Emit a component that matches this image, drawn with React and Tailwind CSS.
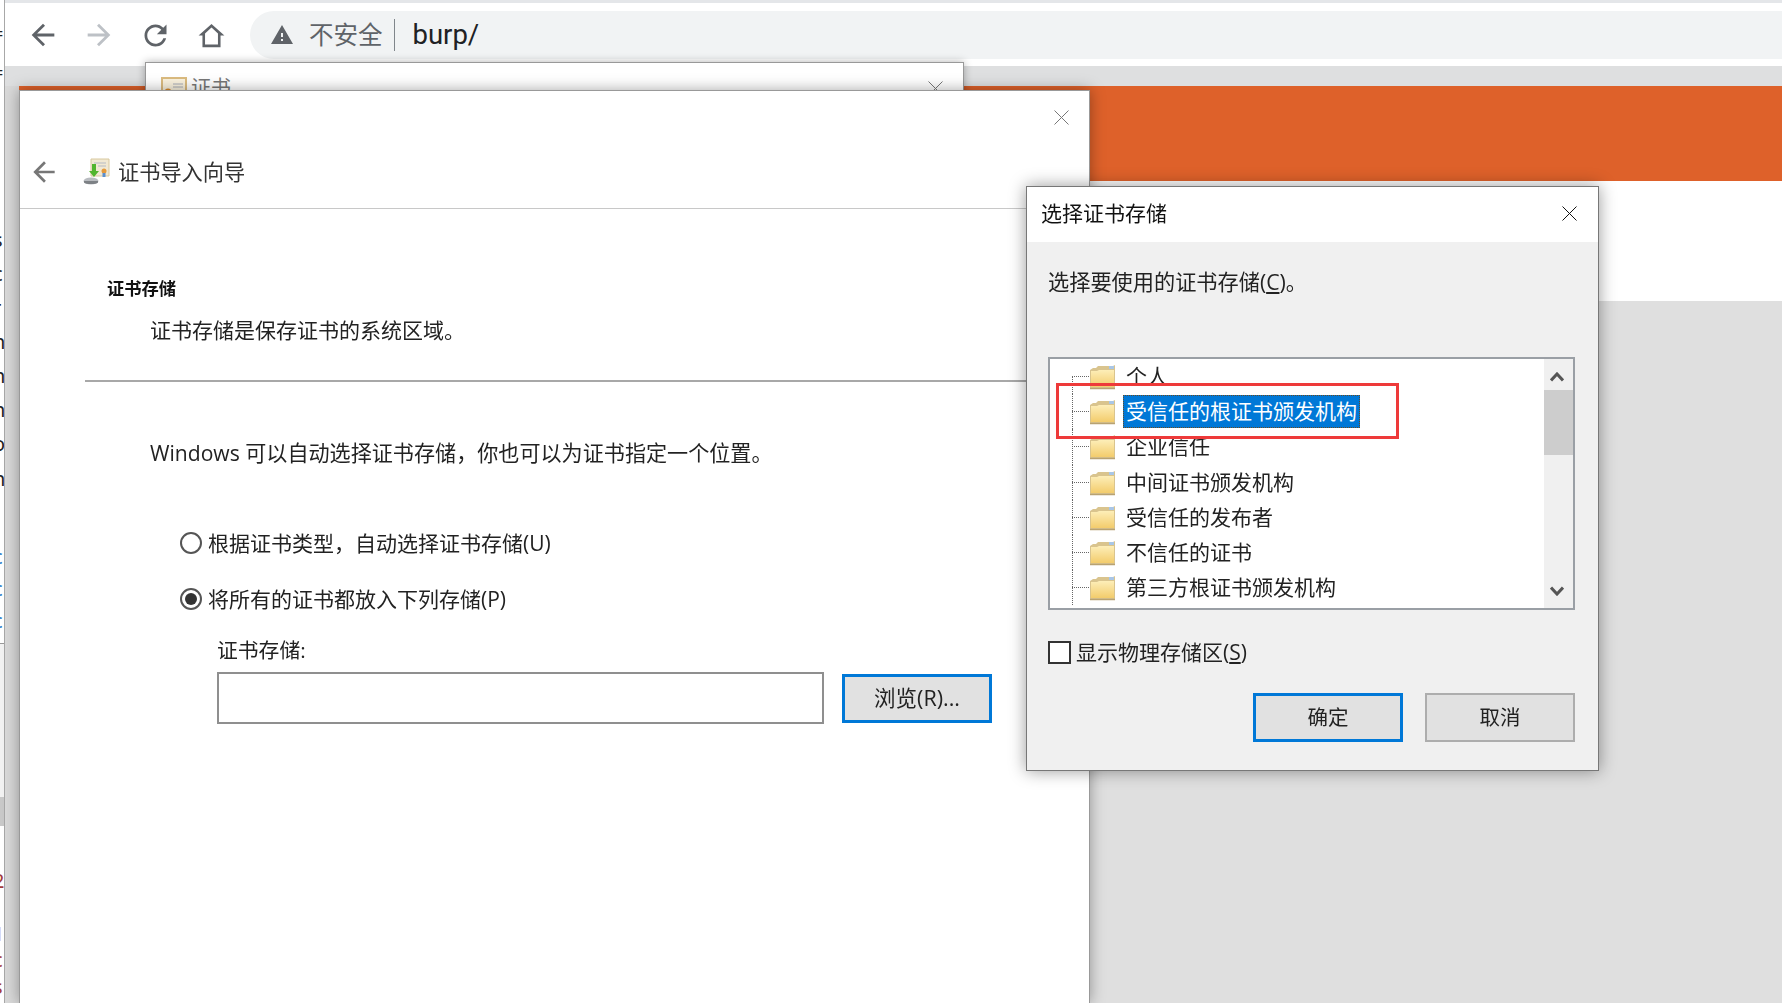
const cjk = "font-['Open_Sans','Noto_Sans_CJK_SC',sans-serif]";

const stores = ['个人', '受信任的根证书颁发机构', '企业信任', '中间证书颁发机构', '受信任的发布者', '不信任的证书', '第三方根证书颁发机构'];
const stripTop = ['s', 'c', 'r', 'n', 'n', 'n', 'o', 'n'];
const stripMid = ['c', 'c', 'c'];
const stripLow = ['2', 'I', '1', 'c', 's'];

function CloseIcon({ className }) {
  return (
    <svg viewBox="0 0 15 15" className={className} fill="none" stroke="currentColor" strokeWidth="1">
      <path d="M0.5 0.5 14.5 14.5M14.5 0.5 0.5 14.5" />
    </svg>
  );
}

function ChromeIcon({ d, className }) {
  return (
    <svg viewBox="0 0 24 24" className={className} fill="currentColor" fillRule="evenodd">
      <path d={d} />
    </svg>
  );
}

function BackArrow({ className }) {
  return <ChromeIcon className={className} d="M20 11H7.83l5.59-5.59L12 4l-8 8 8 8 1.41-1.41L7.83 13H20v-2z" />;
}

function FolderIcon() {
  return (
    <svg viewBox="0 0 27 27" className="h-[27px] w-[27px] shrink-0">
      <defs>
        <linearGradient id="folderFace" x1="0" y1="0" x2="0" y2="1">
          <stop offset="0" stopColor="#fdeeb8" />
          <stop offset="1" stopColor="#f3cc6c" />
        </linearGradient>
      </defs>
      <path d="M1 25.5V7l3-2h3l2-2h15l2-1v23.5z" fill="#d9c48e" />
      <path d="M20 3h5v3h-5z" fill="#a9c6e6" />
      <path d="M2 8h6l2-1h15v17H2z" fill="url(#folderFace)" />
      <path d="M1 25.5h25" stroke="#b8a272" strokeWidth="1.5" />
    </svg>
  );
}

function WizardIcon() {
  return (
    <svg viewBox="0 0 28 28" className="h-[28px] w-[28px]">
      <path d="M9 1h18v17H9z" fill="#f1e8d2" stroke="#d8c89e" strokeWidth="1" />
      <path d="M12 5h12M16 8h8" stroke="#c9c9c9" strokeWidth="1.5" />
      <circle cx="22" cy="13" r="2.5" fill="#e59a3c" />
      <path d="M20.5 15h3v4h-3z" fill="#5a8fd0" />
      <path d="M10 6h4v7h3l-5 6-5-6h3z" fill="#52b52f" />
      <ellipse cx="9" cy="23" rx="7.5" ry="3.5" fill="#b9bcc0" />
      <path d="M2 23v1.5c1.5 2 12.5 2 14 0V23" fill="#7d8185" />
    </svg>
  );
}

function CertIcon() {
  return (
    <svg viewBox="0 0 26 22" className="h-[22px] w-[26px]">
      <path d="M1 1h24v20H1z" fill="#fbf3df" stroke="#dcbc80" strokeWidth="2" />
      <path d="M12 7h10M12 10h10" stroke="#c5c5c5" strokeWidth="1.5" />
      <circle cx="7" cy="15" r="3.5" fill="#d98a2b" />
    </svg>
  );
}

function Radio({ checked, label }) {
  return (
    <div className="flex h-[24px] items-center gap-[6px] pl-[160px]">
      <span className="flex h-[22px] w-[22px] items-center justify-center rounded-full border-2 border-[#555555] bg-white">
        {checked && <span className="h-[12px] w-[12px] rounded-full bg-[#333333]" />}
      </span>
      <span className="text-[21px] leading-none text-[#222222]">{label}</span>
    </div>
  );
}

function TreeRow({ name, index }) {
  const selected = index === 1;

  return (
    <div className="relative ml-[22px] flex h-[35.2px] items-center">
      <span className={`absolute bottom-0 left-0 border-l border-dotted border-[#666666] ${index === 0 ? 'top-1/2' : 'top-0'}`} />
      <span className="w-[17px] border-t border-dotted border-[#666666]" />
      <FolderIcon />
      {selected ? (
        <span className="ml-[7px] flex h-[33px] items-center border border-dotted border-[#6b4a1f] bg-[#0078d7] px-[2px] text-[21px] leading-none text-white">
          {name}
        </span>
      ) : (
        <span className="ml-[10px] text-[21px] leading-none text-[#222222]">{name}</span>
      )}
    </div>
  );
}

function LeftStrip() {
  return (
    <div className="flex h-full w-[5px] shrink-0 flex-col overflow-hidden border-r border-[#a8a8a8] bg-white text-[20px] leading-none text-[#222222]">
      <div className="mt-[24px] h-[40px] -translate-x-[8px]">=</div>
      <div className="h-[40px] -translate-x-[8px]">=</div>
      <div className="h-[131px]" />
      {stripTop.map((ch, i) => (
        <div key={i} className="h-[35px] -translate-x-[7px]">{ch}</div>
      ))}
      <div className="h-[45px]" />
      {stripMid.map((ch, i) => (
        <div key={i} className={`h-[33px] -translate-x-[7px] text-[#2a78c8] ${i === 1 ? 'bg-[#e8a870]' : ''}`}>{ch}</div>
      ))}
      <div className="h-[1px] bg-[#999999]" />
      <div className="h-[157px] bg-[#f2f2f2]" />
      <div className="h-[30px] bg-[#c8c8c8]" />
      <div className="h-[46px]" />
      {stripLow.map((ch, i) => (
        <div key={i} className="h-[27px] -translate-x-[7px] text-[#a33a3a]">{ch}</div>
      ))}
    </div>
  );
}

function Toolbar() {
  return (
    <div className="h-[66px] bg-white">
      <div className="h-[3px] bg-[#e4e6e9]" />
      <div className="flex items-start pl-[10px] pt-[8px]">
        <div className="flex h-[48px] w-[56px] items-center justify-center">
          <BackArrow className="h-[34px] w-[34px] text-[#5f6368]" />
        </div>
        <div className="flex h-[48px] w-[56px] items-center justify-center">
          <BackArrow className="h-[34px] w-[34px] rotate-180 text-[#bdc1c6]" />
        </div>
        <div className="flex h-[48px] w-[56px] items-center justify-center">
          <ChromeIcon
            className="h-[33px] w-[33px] text-[#5f6368]"
            d="M17.65 6.35C16.2 4.9 14.21 4 12 4c-4.42 0-7.99 3.58-7.99 8s3.57 8 7.99 8c3.73 0 6.84-2.55 7.73-6h-2.08c-.82 2.33-3.04 4-5.65 4-3.31 0-6-2.69-6-6s2.69-6 6-6c1.66 0 3.14.69 4.22 1.78L13 11h7V4l-2.35 2.35z"
          />
        </div>
        <div className="flex h-[48px] w-[56px] items-center justify-center">
          <ChromeIcon
            className="h-[31px] w-[31px] text-[#5f6368]"
            d="M12 3 2 12h3v9h14v-9h3zM12 5.9l5 4.5V19H7v-8.6z"
          />
        </div>
        <div className="ml-[11px] flex h-[48px] flex-1 items-center rounded-l-full bg-[#f1f3f4] pl-[20px]">
          <ChromeIcon
            className="h-[24px] w-[24px] text-[#5f6368]"
            d="M1 21h22L12 2 1 21zm12-3h-2v-2h2v2zm0-4h-2v-4h2v4z"
          />
          <span className={`ml-[15px] text-[24.5px] leading-none text-[#5f6368] ${cjk}`}>不安全</span>
          <span className="ml-[11px] h-[32px] w-[1px] bg-[#80868b]" />
          <span className="ml-[18px] font-['Roboto',sans-serif] text-[27.5px] leading-none text-[#202124]">burp/</span>
        </div>
      </div>
    </div>
  );
}

function WizardWindow() {
  return (
    <div className={`absolute bottom-0 left-[19px] top-[90px] w-[1071px] border-x border-t border-[#999999] bg-white shadow-[0_0_14px_rgba(0,0,0,0.35)] blur-[0.4px] ${cjk}`}>
      <div className="h-[118px] border-b border-[#c8c8c8]">
        <div className="flex h-[52px] items-center justify-end pr-[20px]">
          <CloseIcon className="h-[15px] w-[15px] text-[#777777]" />
        </div>
        <div className="flex h-[58px] items-center pl-[8px]">
          <BackArrow className="h-[32px] w-[32px] text-[#777777]" />
          <span className="ml-[22px]"><WizardIcon /></span>
          <span className="ml-[8px] text-[21.2px] leading-none text-[#333333]">证书导入向导</span>
        </div>
      </div>

      <h2 className="ml-[87px] mt-[68px] text-[17.3px] font-bold leading-[24px] text-[#111111]">证书存储</h2>
      <p className="ml-[130px] mt-[17px] text-[21px] leading-[24px] text-[#222222]">证书存储是保存证书的系统区域。</p>
      <div className="ml-[65px] mr-[20px] mt-[38px] h-[2px] bg-[#a8a8a8]" />
      <p className="ml-[130px] mt-[59px] text-[21.1px] leading-[24px] text-[#222222]">Windows 可以自动选择证书存储，你也可以为证书指定一个位置。</p>

      <div className="mt-[66px]">
        <Radio label="根据证书类型，自动选择证书存储(U)" />
      </div>
      <div className="mt-[32px]">
        <Radio checked label="将所有的证书都放入下列存储(P)" />
      </div>

      <p className="ml-[197px] mt-[27px] text-[20.8px] leading-[24px] text-[#222222]">证书存储:</p>
      <div className="ml-[197px] mt-[10px] flex items-center gap-[18px]">
        <div className="h-[52px] w-[607px] border-2 border-[#8f8f8f] bg-white" />
        <button className="h-[49px] w-[150px] border-[3px] border-[#0078d7] bg-[#e1e1e1] text-[21.5px] leading-none text-[#222222]">
          浏览(R)...
        </button>
      </div>
    </div>
  );
}

function StorePicker() {
  return (
    <div className={`absolute left-[1026px] top-[186px] h-[585px] w-[573px] border border-[#777777] bg-[#f0f0f0] shadow-[0_0_16px_rgba(0,0,0,0.4)] blur-[0.4px] ${cjk}`}>
      <div className="flex h-[55px] items-center justify-between bg-white pb-[2px] pl-[14px] pr-[21px]">
        <span className="text-[21px] leading-none text-[#111111]">选择证书存储</span>
        <CloseIcon className="h-[15px] w-[15px] text-[#111111]" />
      </div>

      <div className="pl-[21px] pr-[23px] pt-[28px]">
        <p className="text-[21.2px] leading-[24px] text-[#222222]">
          选择要使用的证书存储(<span className="underline">C</span>)。
        </p>

        <div className="mt-[63px] flex h-[253px] overflow-hidden border-2 border-[#9a9fa5] bg-white">
          <div className="flex-1 overflow-hidden">
            {stores.map((name, index) => (
              <TreeRow key={name} name={name} index={index} />
            ))}
          </div>
          <div className="flex w-[29px] shrink-0 flex-col bg-[#f0f0f0]">
            <div className="flex h-[31px] items-center justify-center pr-[3px] pt-[4px]">
              <svg viewBox="0 0 14 10" className="h-[10px] w-[14px]" fill="none" stroke="#555555" strokeWidth="3">
                <path d="M1 8.5 7 2l6 6.5" />
              </svg>
            </div>
            <div className="h-[65px] bg-[#cdcdcd]" />
            <div className="flex-1" />
            <div className="flex h-[36px] items-center justify-center pr-[3px] pt-[2px]">
              <svg viewBox="0 0 14 10" className="h-[10px] w-[14px]" fill="none" stroke="#555555" strokeWidth="3">
                <path d="M1 1.5 7 8l6-6.5" />
              </svg>
            </div>
          </div>
        </div>

        <label className="mt-[31px] flex h-[23px] items-center gap-[5px]">
          <span className="h-[23px] w-[23px] border-2 border-[#333333] bg-white" />
          <span className="text-[21px] leading-none text-[#222222]">
            显示物理存储区(<span className="underline">S</span>)
          </span>
        </label>

        <div className="mt-[29px] flex justify-end gap-[22px]">
          <button className="h-[49px] w-[150px] border-[3px] border-[#0078d7] bg-[#e1e1e1] text-[20.5px] leading-none text-[#222222]">确定</button>
          <button className="h-[49px] w-[150px] border-2 border-[#adadad] bg-[#e1e1e1] text-[20.5px] leading-none text-[#222222]">取消</button>
        </div>
      </div>

      <div className="absolute left-[29px] top-[196px] h-[56px] w-[343px] border-[3px] border-[#ee3a3a]" />
    </div>
  );
}

export default function App() {
  return (
    <div className="relative flex h-[1003px] w-[1782px] overflow-hidden bg-white">
      <LeftStrip />
      <div className="flex min-w-0 flex-1 flex-col">
        <Toolbar />
        <div className="h-[20px] bg-[#dedfe0]" />
        <div className="flex flex-1 flex-col bg-[#d9d9d9] pl-[14px]">
          <div className="h-[95px] bg-[#de612a]" />
          <div className="h-[120px] bg-white" />
          <div className="flex-1 bg-[#dfdfdf]" />
        </div>
      </div>

      <div className={`absolute left-[145px] top-[62px] h-[40px] w-[819px] border border-[#999999] bg-white shadow-[0_0_8px_rgba(0,0,0,0.3)] ${cjk}`}>
        <div className="flex items-center justify-between pl-[15px] pr-[20px] pt-[14px]">
          <div className="flex items-center gap-[4px]">
            <CertIcon />
            <span className="text-[20px] leading-none text-[#777777]">证书</span>
          </div>
          <CloseIcon className="h-[15px] w-[15px] text-[#777777]" />
        </div>
      </div>

      <WizardWindow />
      <StorePicker />
    </div>
  );
}
